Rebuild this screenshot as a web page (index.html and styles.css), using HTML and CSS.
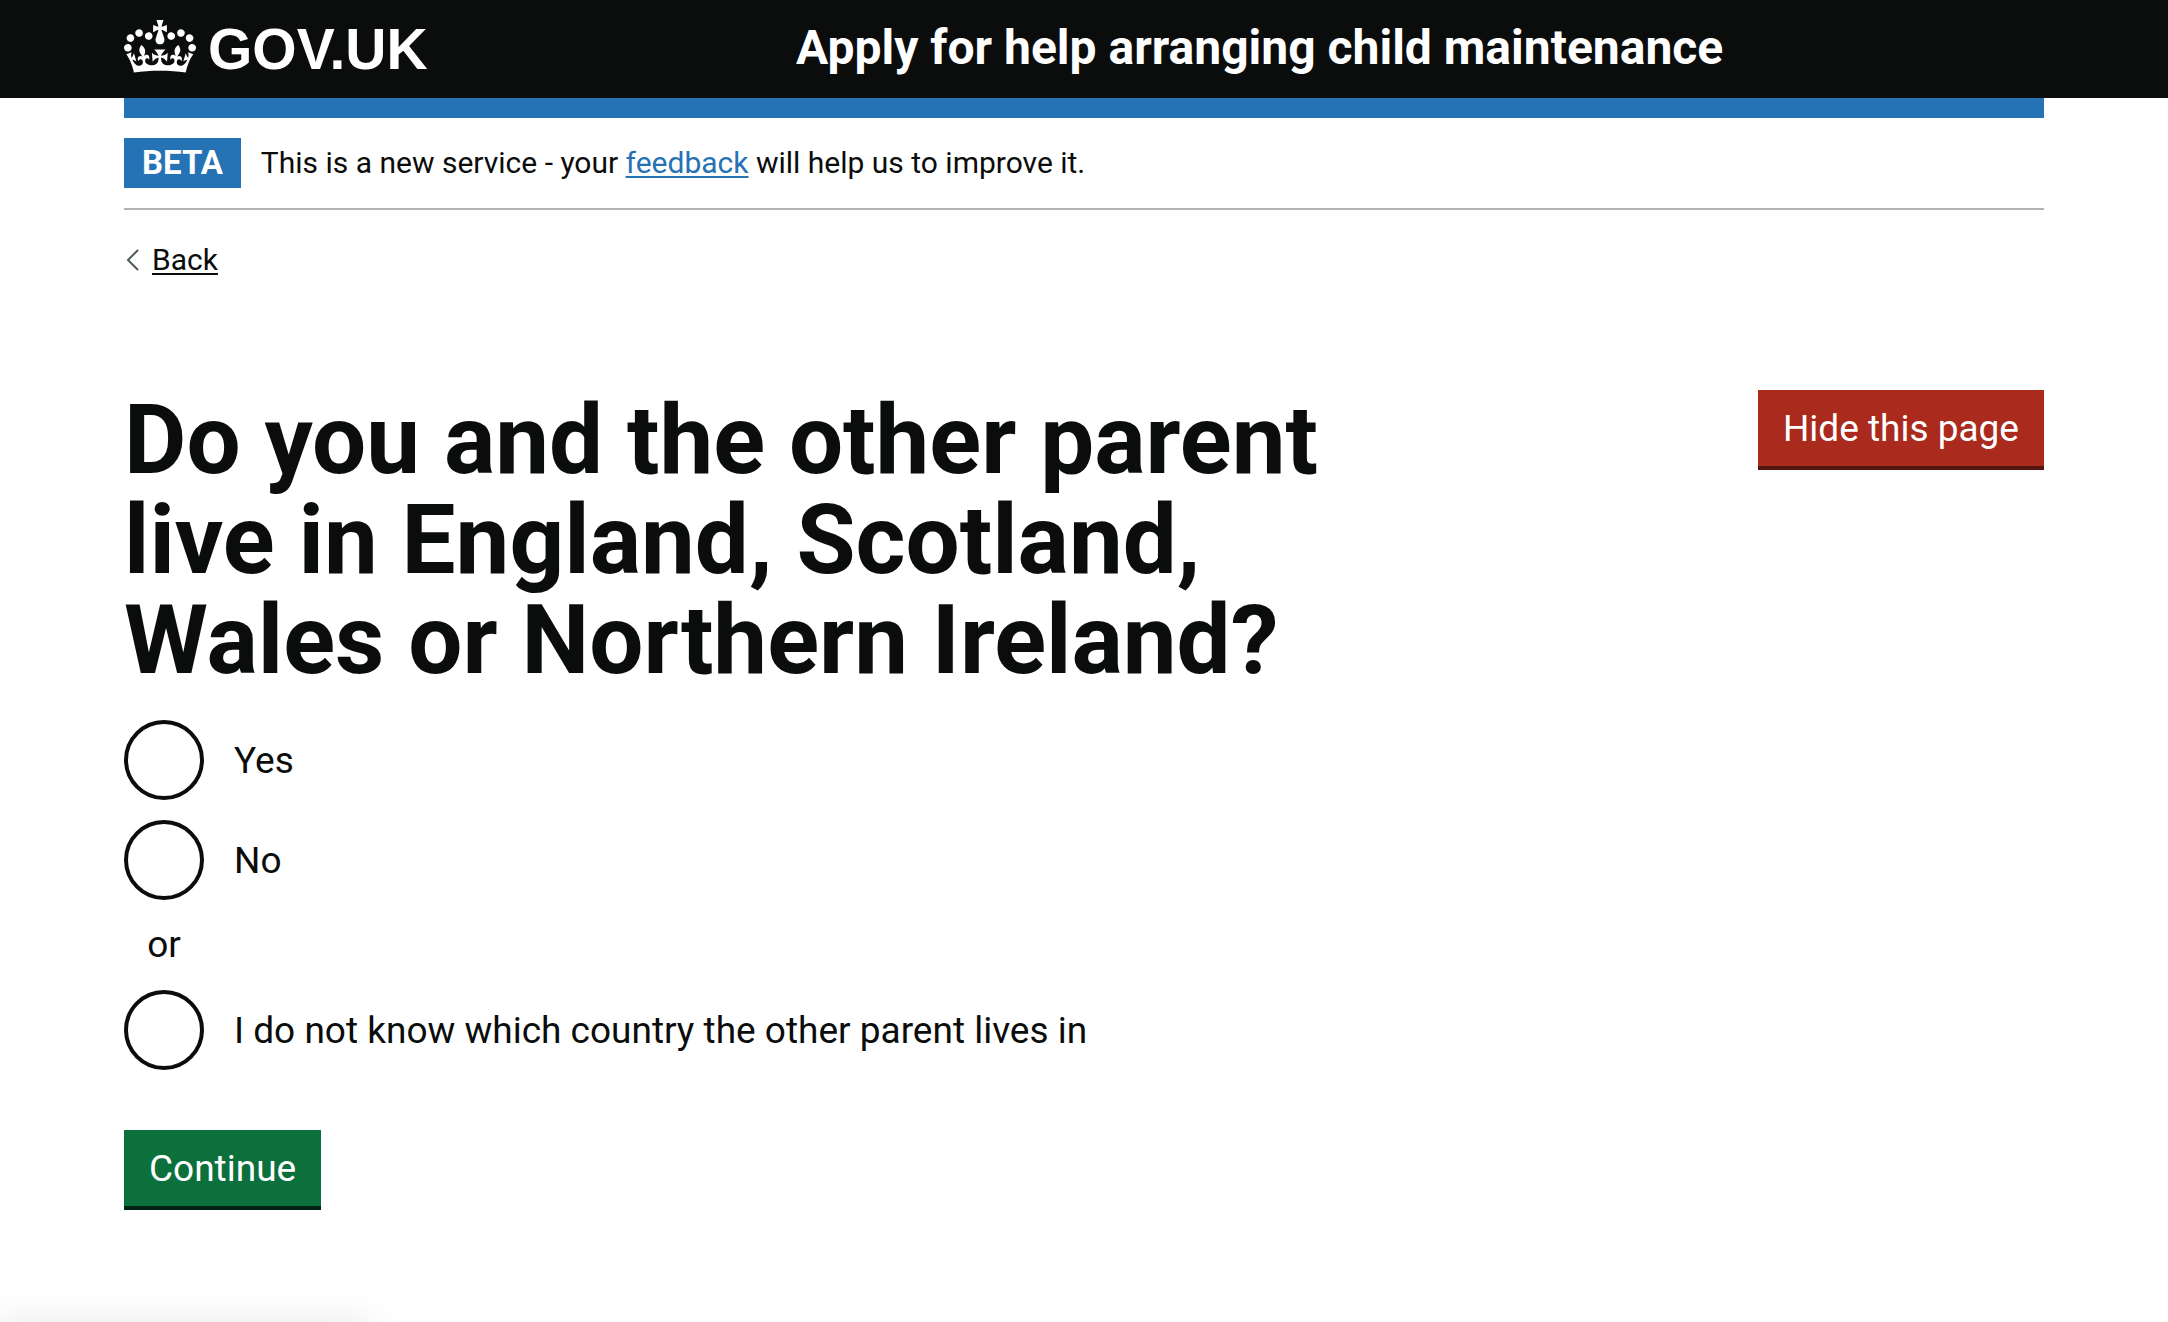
FILE: index.html
```html
<!DOCTYPE html>
<html lang="en">
<head>
<meta charset="utf-8">
<meta name="viewport" content="width=device-width, initial-scale=1">
<title>Do you and the other parent live in England, Scotland, Wales or Northern Ireland?</title>
<link rel="stylesheet" href="styles.css">
</head>
<body>
<header class="header">
  <div class="container header-inner">
    <div class="header-logo">
      <a class="logo-link" href="#">
        <svg class="crown" viewBox="0 0 132 97" width="72" height="53" aria-hidden="true">
          <path fill="currentColor" fill-rule="evenodd" d="M25 30.2c3.5 1.5 7.7-.2 9.1-3.7 1.5-3.6-.2-7.8-3.9-9.2-3.6-1.4-7.6.3-9.1 3.9-1.4 3.5.3 7.5 3.9 9zM9 39.5c3.6 1.5 7.8-.2 9.2-3.7 1.5-3.6-.2-7.8-3.9-9.1-3.6-1.5-7.6.2-9.1 3.8-1.4 3.5.3 7.5 3.8 9zM4.4 57.2c3.5 1.5 7.7-.2 9.1-3.8 1.5-3.6-.2-7.7-3.9-9.1-3.5-1.5-7.6.3-9.1 3.8-1.4 3.5.3 7.6 3.9 9.1zm38.3-21.4c3.5 1.5 7.7-.2 9.1-3.8 1.5-3.6-.2-7.7-3.9-9.1-3.6-1.5-7.6.3-9.1 3.8-1.3 3.6.4 7.7 3.9 9.1zm64.4-5.6c-3.6 1.5-7.8-.2-9.1-3.7-1.5-3.6.2-7.8 3.8-9.2 3.6-1.4 7.7.3 9.2 3.9 1.3 3.5-.4 7.5-3.9 9zm15.9 9.3c-3.6 1.5-7.7-.2-9.1-3.7-1.5-3.6.2-7.8 3.7-9.1 3.6-1.5 7.7.2 9.2 3.8 1.5 3.5-.3 7.5-3.8 9zm4.7 17.7c-3.6 1.5-7.8-.2-9.2-3.8-1.5-3.6.2-7.7 3.9-9.1 3.6-1.5 7.7.3 9.2 3.8 1.3 3.5-.4 7.6-3.9 9.1zM89.3 35.8c-3.6 1.5-7.8-.2-9.2-3.8-1.4-3.6.2-7.7 3.9-9.1 3.6-1.5 7.7.3 9.2 3.8 1.4 3.6-.3 7.7-3.9 9.1zM69.7 17.7l8.9 4.7V9.3l-8.9 2.8c-.2-.3-.5-.6-.9-.9L72.4 0H59.6l3.5 11.2c-.3.3-.6.5-.9.9l-8.8-2.8v13.1l8.8-4.7c.3.3.6.7.9.9l-5 15.4v.1c-.2.8-.4 1.6-.4 2.4 0 4.1 3.1 7.5 7 8.1h.2c.3 0 .7.1 1 .1.4 0 .7 0 1-.1h.2c4-.6 7.1-4.1 7.1-8.1 0-.8-.1-1.7-.4-2.4V34l-5.1-15.4c.4-.2.7-.6 1-.9zM66 92.8c16.9 0 32.8 1.1 47.1 3.2 4-16.9 8.9-26.7 14-33.5l-9.6-3.4c1 4.9 1.1 7.2 0 10.2-1.5-1.4-3-4.3-4.2-8.7L108.6 76c2.8-2 5-3.2 7.5-3.3-4.4 9.4-10 11.9-13.6 11.2-4.3-.8-6.3-4.6-5.6-7.9 1-4.7 5.7-5.9 8-.5 4.3-8.7-3-11.4-7.6-8.8 7.1-7.2 7.9-13.5 2.1-21.1-8 6.1-8.1 12.3-4.5 20.8-4.7-5.4-12.1-2.5-9.5 6.2 3.4-5.2 7.9-2 7.2 3.1-.6 4.3-6.4 7.8-13.5 7.2-10.3-.9-10.9-8-11.2-13.8 2.5-.5 7.1 1.8 11 7.3L80.2 60c-4.1 4.4-8 5.3-12.3 5.4 1.4-4.4 8-11.6 8-11.6H55.5s6.4 7.2 7.9 11.6c-4.2-.1-8-1-12.3-5.4l1.4 16.4c3.9-5.5 8.5-7.7 10.9-7.3-.3 5.8-.9 12.8-11.1 13.8-7.2.6-12.9-2.9-13.5-7.2-.7-5 3.8-8.3 7.1-3.1 2.7-8.7-4.6-11.6-9.4-6.2 3.7-8.5 3.6-14.7-4.6-20.8-5.8 7.6-5 13.9 2.2 21.1-4.7-2.6-11.9.1-7.7 8.8 2.3-5.5 7.1-4.2 8.1.5.7 3.3-1.3 7.1-5.7 7.9-3.5.7-9-1.8-13.5-11.2 2.5.1 4.7 1.3 7.5 3.3l-4.7-15.4c-1.2 4.4-2.7 7.2-4.3 8.7-1.1-3-.9-5.3 0-10.2l-9.5 3.4c5 6.9 9.9 16.7 14 33.5 14.8-2.1 30.8-3.2 47.7-3.2z"/>
        </svg>
        <span class="logo-text">GOV.UK</span>
      </a>
    </div>
    <a class="service-name" href="#">Apply for help arranging child maintenance</a>
  </div>
</header>

<div class="container">
  <div class="header-bar"></div>
  <div class="phase-banner">
    <strong class="tag">BETA</strong>
    <span class="phase-text">This is a new service - your <a class="link" href="#">feedback</a> will help us to improve it.</span>
  </div>
  <a class="back-link" href="#">
    <svg class="back-arrow" viewBox="0 0 18 24" width="18" height="24" aria-hidden="true">
      <path d="M14 2 4 12l10 10" fill="none" stroke="currentColor" stroke-width="2"/>
    </svg>
    <span class="back-text">Back</span>
  </a>

  <main class="main">
    <form class="question">
      <fieldset class="fieldset">
        <legend class="legend"><h1 class="heading">Do you and the other parent live in England, Scotland, Wales or Northern Ireland?</h1></legend>
        <div class="radios">
          <div class="radio-item">
            <input class="radio" type="radio" id="live-yes" name="live" value="yes">
            <label class="radio-label" for="live-yes">Yes</label>
          </div>
          <div class="radio-item">
            <input class="radio" type="radio" id="live-no" name="live" value="no">
            <label class="radio-label" for="live-no">No</label>
          </div>
          <div class="divider">or</div>
          <div class="radio-item">
            <input class="radio" type="radio" id="live-unknown" name="live" value="unknown">
            <label class="radio-label" for="live-unknown">I do not know which country the other parent lives in</label>
          </div>
        </div>
      </fieldset>
      <button class="button" type="submit">Continue</button>
    </form>
    <button class="button button-warning" type="button">Hide this page</button>
  </main>
</div>
<div class="status-shadow"></div>
</body>
</html>
```
FILE: styles.css
```css
* {
  box-sizing: border-box;
}

body {
  margin: 0;
  background: #fff;
  color: #0b0c0c;
  font-family: Roboto, "Liberation Sans", sans-serif;
  font-size: 37px;
  line-height: 50px;
}

.container {
  max-width: 1920px;
  width: calc(100% - 60px);
  margin: 0 auto;
}

.header {
  background: #0b0c0c;
  color: #fff;
}

.header-inner {
  display: flex;
  align-items: center;
  min-height: 98px;
}

.header-logo {
  display: flex;
  flex: 0 0 35%;
}

.logo-link {
  display: flex;
  align-items: center;
  gap: 12px;
  color: inherit;
  text-decoration: none;
}

.crown {
  display: block;
  margin-bottom: 6px;
}

.logo-text {
  font-family: "Liberation Sans", sans-serif;
  font-size: 57px;
  font-weight: 700;
  line-height: 60px;
}

.service-name {
  padding-bottom: 2px;
  color: inherit;
  font-size: 48px;
  font-weight: 700;
  text-decoration: none;
}

.header-bar {
  height: 20px;
  background: #2572b4;
}

.phase-banner {
  display: flex;
  align-items: center;
  gap: 20px;
  padding: 20px 0;
  border-bottom: 2px solid #b1b4b6;
  font-size: 30px;
}

.tag {
  padding: 0 18px;
  background: #2572b4;
  color: #fff;
  font-size: 33px;
  font-weight: 700;
}

.link {
  color: #2572b4;
  text-decoration-thickness: 2px;
  text-underline-offset: 3px;
}

.back-link {
  display: flex;
  align-items: center;
  gap: 10px;
  width: fit-content;
  margin-top: 30px;
  color: #0b0c0c;
  font-size: 30px;
  line-height: 40px;
  text-decoration: none;
}

.back-arrow {
  color: #505a5f;
}

.back-text {
  text-decoration: underline;
  text-decoration-thickness: 2px;
  text-underline-offset: 3px;
}

.main {
  display: flex;
  align-items: flex-start;
  justify-content: space-between;
  gap: 60px;
  padding: 110px 0 112px;
}

.question {
  flex: 0 1 1260px;
}

.fieldset {
  margin: 0 0 60px;
  padding: 0;
  border: 0;
}

.legend {
  padding: 0;
}

.heading {
  margin: 0 0 30px;
  font-size: 96px;
  font-weight: 700;
  line-height: 100px;
}

.radios {
  display: flex;
  flex-direction: column;
  gap: 20px;
}

.radio-item {
  display: flex;
  align-items: center;
  gap: 30px;
}

.radio {
  flex: none;
  width: 80px;
  height: 80px;
  margin: 0;
  appearance: none;
  border: 4px solid #0b0c0c;
  border-radius: 50%;
  background: #fff;
}

.radio:checked {
  background: radial-gradient(#0b0c0c 20px, #fff 21px);
}

.radio-label {
  padding-top: 2px;
}

.divider {
  width: 80px;
  text-align: center;
}

.button {
  flex: none;
  padding: 14px 25px 12px;
  border: 0;
  border-bottom: 4px solid #002413;
  background: #0c703c;
  color: #fff;
  font: inherit;
}

.button-warning {
  border-bottom-color: #55150f;
  background: #aa2a1e;
}

/* Soft shadow along the bottom-left edge of the window */
.status-shadow {
  position: fixed;
  top: 100%;
  left: 0;
  width: 370px;
  height: 40px;
  box-shadow: 0 0 36px rgba(0, 0, 0, 0.1);
}
```
